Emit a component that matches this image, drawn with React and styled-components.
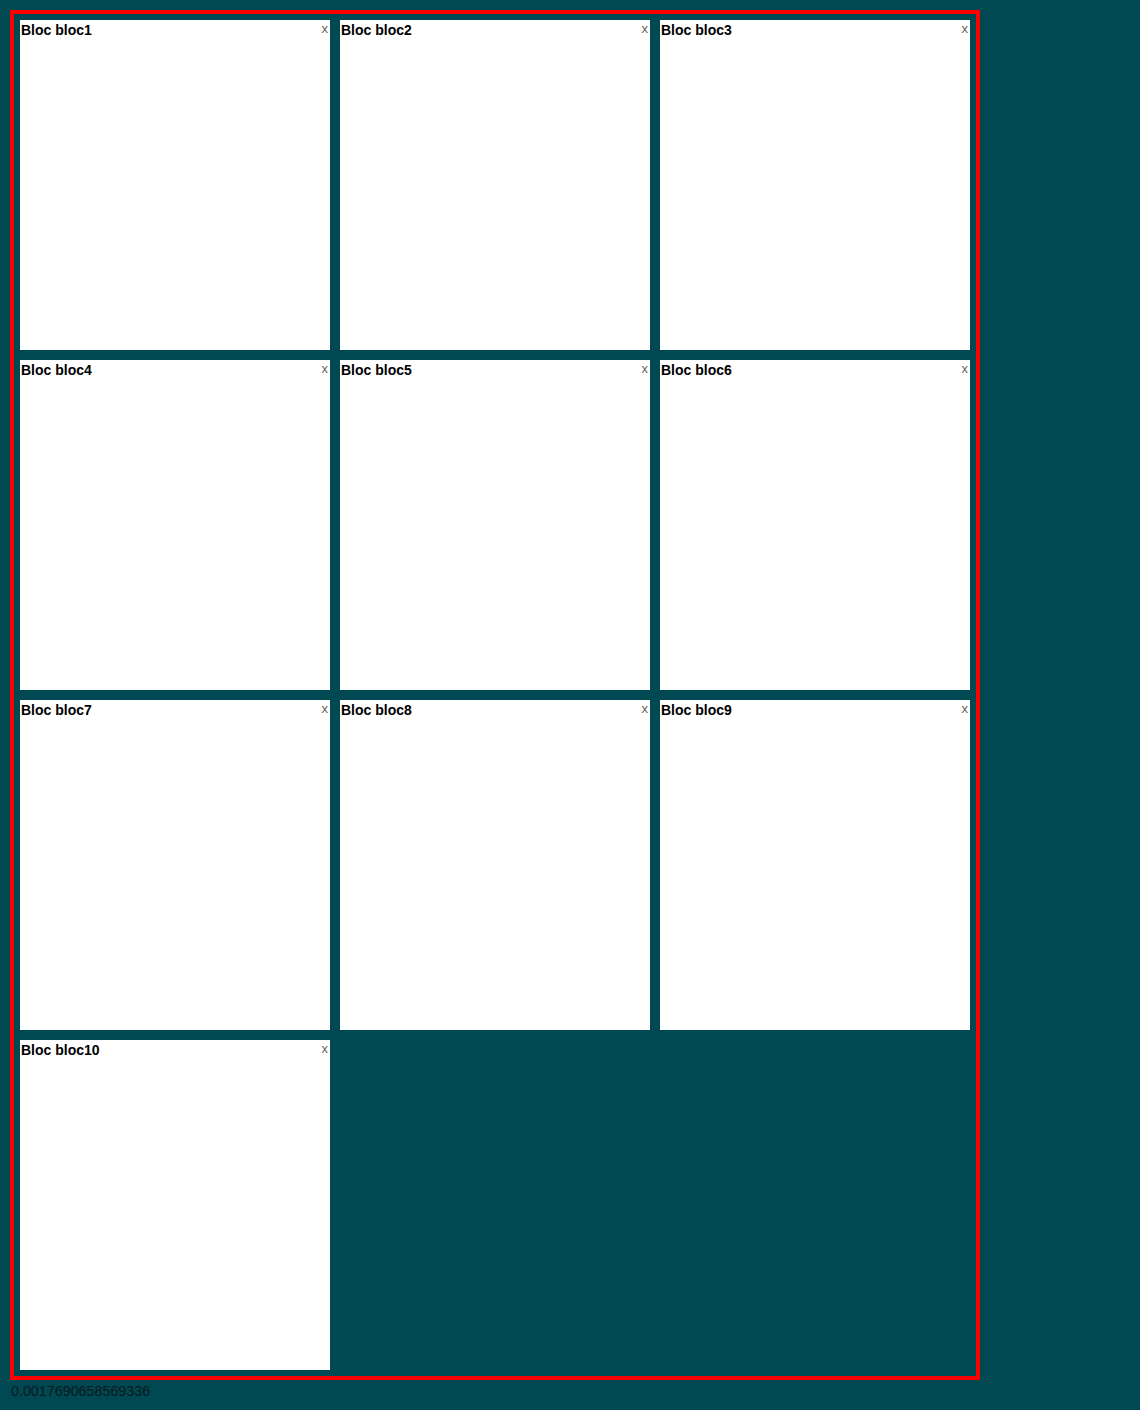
import React from "react";
import styled, { createGlobalStyle } from "styled-components";

const Global = createGlobalStyle`
  html, body { margin: 0; padding: 0; background: #004852; }
  body { font-family: "Liberation Sans", Arial, sans-serif; }
`;

const Page = styled.div`
  padding: 10px 0 0 10px;
  min-height: 1400px;
`;

const Board = styled.div`
  width: 960px;
  border: 4px solid #ff0000;
  padding: 1px;
  display: grid;
  grid-template-columns: repeat(3, 320px);
  grid-auto-rows: 340px;
`;

const Block = styled.div`
  margin: 5px;
  background: #ffffff;
  position: relative;
  padding: 3px 1px;
`;

const Title = styled.div`
  font-weight: bold;
  font-size: 14px;
  line-height: 15px;
  color: #000;
`;

const Close = styled.span`
  position: absolute;
  top: 2px;
  right: 2px;
  font-size: 13px;
  line-height: 14px;
  color: #666;
  cursor: pointer;
`;

const Stat = styled.div`
  font-size: 14.3px;
  line-height: 16px;
  color: #0a1a1f;
  padding: 3px 0 0 1px;
`;

export default function App() {
  const blocks = Array.from({ length: 10 }, (_, i) => `bloc${i + 1}`);
  return (
    <Page>
      <Global />
      <Board>
        {blocks.map((b) => (
          <Block key={b}>
            <Title>Bloc {b}</Title>
            <Close>x</Close>
          </Block>
        ))}
      </Board>
      <Stat>0.0017690658569336</Stat>
    </Page>
  );
}
